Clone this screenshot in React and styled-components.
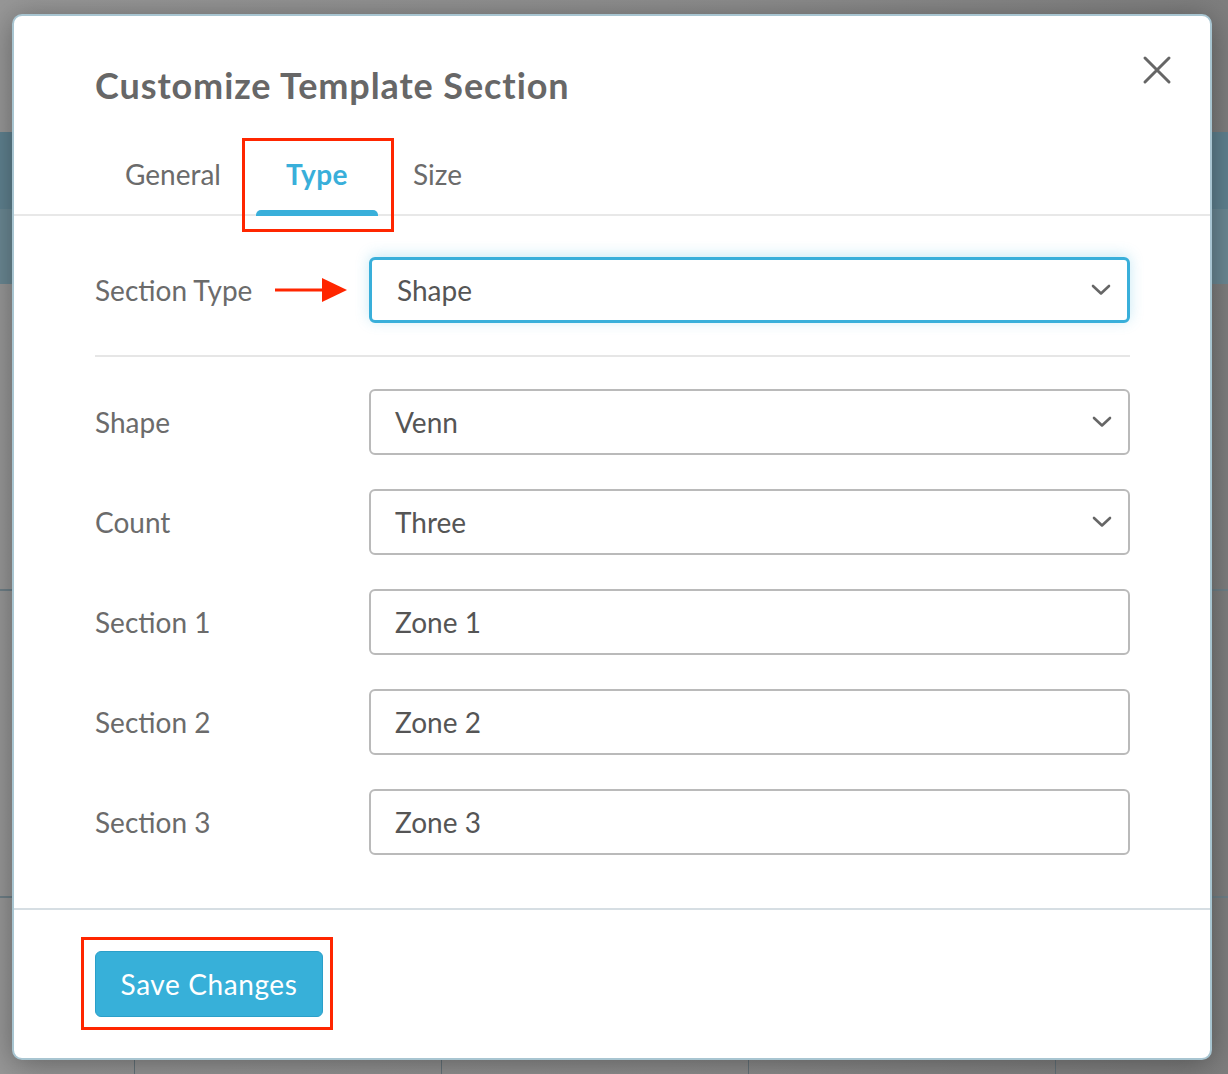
import React from 'react'
import styled, { createGlobalStyle, css } from 'styled-components'

const GlobalStyle = createGlobalStyle`
  body {
    margin: 0;
    background: #8b8b8b;
    font-family: Lato, "Open Sans", sans-serif;
  }
  * { box-sizing: border-box; }
`

const Page = styled.div`
  position: relative;
  width: 1228px;
  height: 1074px;
  overflow: hidden;
  background: linear-gradient(90deg, #979797 0%, #8d8d8d 60%, #7e7e7e 100%);
`

const BgStrip = styled.div`
  height: ${(p) => p.$h}px;
  ${(p) => p.$tone === 'dark' && css`background: #5f818f;`}
  ${(p) => p.$tone === 'light' && css`background: #6a8893;`}
  ${(p) => p.$line && css`border-bottom: 2px solid #6e7f87;`}
`

const BgCells = styled.div`
  display: grid;
  grid-template-columns: 135px repeat(3, 307px) 1fr;
  height: 176px;
`

const BgCell = styled.div`
  border-right: 1px solid #65737a;
  &:last-child { border-right: none; }
`

const Modal = styled.div`
  position: absolute;
  top: 14px;
  left: 12px;
  width: 1200px;
  height: 1046px;
  background: #fff;
  border: 2px solid #a8c5d1;
  border-radius: 10px;
  box-shadow: 0 4px 30px rgba(0, 0, 0, 0.35);
  display: flex;
  flex-direction: column;
`

const Header = styled.div`
  position: relative;
  padding: 47px 0 0 81px;
`

const Title = styled.h1`
  margin: 0;
  font-size: 36px;
  line-height: 44px;
  font-weight: 700;
  color: #676767;
  letter-spacing: 0.9px;
`

const CloseButton = styled.button`
  position: absolute;
  top: 39px;
  right: 38px;
  width: 30px;
  height: 30px;
  padding: 0;
  border: none;
  background: none;
  cursor: pointer;
`

const TabBar = styled.div`
  display: flex;
  gap: 5px;
  margin-top: 33px;
  padding-left: 81px;
  border-bottom: 2px solid #e8e8e8;
`

const highlight = css`
  &::after {
    content: '';
    position: absolute;
    top: ${(p) => p.$ring[0]}px;
    right: ${(p) => p.$ring[1]}px;
    bottom: ${(p) => p.$ring[2]}px;
    left: ${(p) => p.$ring[3]}px;
    border: 3px solid #ff2600;
    pointer-events: none;
  }
`

const Tab = styled.div`
  position: relative;
  padding: 14px 30px 22px;
  font-size: 28px;
  line-height: 40px;
  letter-spacing: ${(p) => (p.$active ? 0.5 : 0)}px;
  color: ${(p) => (p.$active ? '#39afda' : '#6b6b6b')};
  font-weight: ${(p) => (p.$active ? 700 : 400)};
  margin-bottom: -2px;
  ${(p) =>
    p.$active &&
    css`
      &::before {
        content: '';
        position: absolute;
        left: 0;
        right: 0;
        bottom: 0;
        height: 6px;
        border-radius: 5px 5px 0 0;
        background: #39afda;
      }
    `}
  ${(p) => p.$ring && highlight}
`

const Body = styled.div`
  flex: 1;
  padding: 41px 80px 0 81px;
`

const Row = styled.div`
  display: grid;
  grid-template-columns: 274px 1fr;
  align-items: center;
  & + & { margin-top: 34px; }
`

const LabelCell = styled.div`
  display: flex;
  align-items: center;
  justify-content: space-between;
  padding-right: 22px;
`

const Label = styled.label`
  font-size: 28px;
  color: #6b6b6b;
`

const Divider = styled.hr`
  margin: 32px 0 32px;
  border: none;
  border-top: 2px solid #e6e6e6;
`

const fieldBase = css`
  height: 66px;
  width: 100%;
  border-radius: 6px;
  font-family: Lato, "Open Sans", sans-serif;
  font-size: 28px;
  color: #555;
  background: #fff;
`

const SelectBox = styled.div`
  ${fieldBase}
  display: flex;
  align-items: center;
  justify-content: space-between;
  padding: 0 16px 0 ${(p) => (p.$focused ? 25 : 24)}px;
  border: ${(p) => (p.$focused ? '3px solid #39afda' : '2px solid #bababa')};
  ${(p) => p.$focused && css`box-shadow: 0 -2px 14px rgba(57, 175, 218, 0.28);`}
`

const TextInput = styled.input`
  ${fieldBase}
  display: block;
  padding: 0 24px;
  border: 2px solid #bababa;
  outline: none;
`

const Footer = styled.div`
  border-top: 2px solid #d6dee3;
  padding: 41px 81px 41px;
`

const ButtonWrap = styled.div`
  position: relative;
  display: inline-block;
  ${(p) => p.$ring && highlight}
`

const SaveButton = styled.button`
  display: block;
  width: 228px;
  height: 66px;
  border: 1px solid #2b9fc9;
  border-radius: 6px;
  background: #37b0d9;
  color: #fff;
  font-family: Lato, "Open Sans", sans-serif;
  font-size: 28px;
  letter-spacing: 0.6px;
  cursor: pointer;
`

const Chevron = () => (
  <svg width="20" height="12" viewBox="0 0 20 12">
    <path d="M2 2 L10 9.5 L18 2" fill="none" stroke="#666" strokeWidth="2.6" strokeLinecap="round" strokeLinejoin="round" />
  </svg>
)

const Arrow = () => (
  <svg width="72" height="26" viewBox="0 0 72 26">
    <rect x="0" y="11.5" width="50" height="3" fill="#ff2600" />
    <path d="M47 1 L72 13 L47 25 Z" fill="#ff2600" />
  </svg>
)

const Select = ({ value, focused }) => (
  <SelectBox $focused={focused}>
    <span>{value}</span>
    <Chevron />
  </SelectBox>
)

const fields = [
  { label: 'Shape', value: 'Venn', select: true },
  { label: 'Count', value: 'Three', select: true },
  { label: 'Section 1', value: 'Zone 1' },
  { label: 'Section 2', value: 'Zone 2' },
  { label: 'Section 3', value: 'Zone 3' },
]

export default function App() {
  return (
    <>
      <GlobalStyle />
      <Page>
        <BgStrip $h={132} />
        <BgStrip $h={77} $tone="dark" />
        <BgStrip $h={75} $tone="light" />
        <BgStrip $h={307} $line />
        <BgStrip $h={307} $line />
        <BgCells>
          <BgCell />
          <BgCell />
          <BgCell />
          <BgCell />
          <BgCell />
        </BgCells>

        <Modal>
          <Header>
            <Title>Customize Template Section</Title>
            <CloseButton aria-label="Close">
              <svg width="30" height="30" viewBox="0 0 30 30">
                <path d="M3 3 L27 27 M27 3 L3 27" stroke="#666" strokeWidth="3" strokeLinecap="round" />
              </svg>
            </CloseButton>
          </Header>

          <TabBar>
            <Tab>General</Tab>
            <Tab $active $ring={[-2, -16, -16, -14]}>Type</Tab>
            <Tab>Size</Tab>
          </TabBar>

          <Body>
            <Row>
              <LabelCell>
                <Label>Section Type</Label>
                <Arrow />
              </LabelCell>
              <Select value="Shape" focused />
            </Row>
            <Divider />
            {fields.map((f) => (
              <Row key={f.label}>
                <LabelCell>
                  <Label>{f.label}</Label>
                </LabelCell>
                {f.select ? <Select value={f.value} /> : <TextInput defaultValue={f.value} />}
              </Row>
            ))}
          </Body>

          <Footer>
            <ButtonWrap $ring={[-14, -10, -13, -14]}>
              <SaveButton>Save Changes</SaveButton>
            </ButtonWrap>
          </Footer>
        </Modal>
      </Page>
    </>
  )
}
